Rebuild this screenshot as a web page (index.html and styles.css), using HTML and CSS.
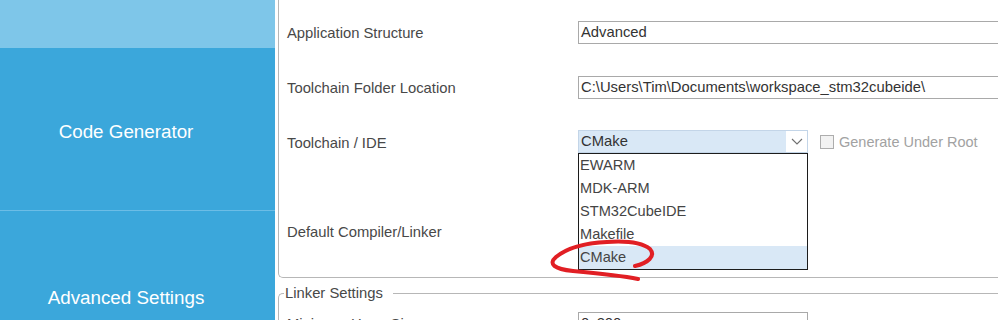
FILE: index.html
```html
<!DOCTYPE html>
<html lang="en">
<head>
  <meta charset="UTF-8">
  <meta name="viewport" content="width=device-width, initial-scale=1.0">
  <title>Project Manager - Code Generator</title>
  <link rel="stylesheet" href="styles.css">
</head>
<body>

<div class="app">
  <nav class="sidebar">
    <div class="nav-head"></div>
    <div class="nav-item nav-active">Code Generator</div>
    <div class="nav-item nav-last">Advanced Settings</div>
  </nav>

  <main class="content">
    <div class="group">
      <div class="row">
        <span class="label">Application Structure</span>
        <div class="field">Advanced</div>
      </div>
      <div class="row">
        <span class="label">Toolchain Folder Location</span>
        <div class="field">C:\Users\Tim\Documents\workspace_stm32cubeide\</div>
      </div>
      <div class="row">
        <span class="label">Toolchain / IDE</span>
        <div class="control-line">
          <div class="combo-wrap">
            <div class="combo">
              <span class="combo-value">CMake</span>
              <span class="combo-arrow">
                <svg width="12" height="7" viewBox="0 0 12 7"><path d="M1 1 L6 6 L11 1" fill="none" stroke="#6f6f6f" stroke-width="1.1"/></svg>
              </span>
            </div>
            <ul class="dropdown">
              <li>EWARM</li>
              <li>MDK-ARM</li>
              <li>STM32CubeIDE</li>
              <li>Makefile</li>
              <li class="selected">CMake</li>
            </ul>
          </div>
          <label class="check"><span class="box"></span>Generate Under Root</label>
        </div>
      </div>
      <div class="row row-compiler">
        <span class="label">Default Compiler/Linker</span>
      </div>
    </div>

    <fieldset class="linker">
      <legend>Linker Settings</legend>
      <div class="row row-linker">
        <span class="label">Minimum Heap Size</span>
        <div class="field field-short">0x200</div>
      </div>
    </fieldset>
  </main>

  <!-- hand drawn annotation over the list -->
  <svg class="mark" width="130" height="60" viewBox="0 0 130 60">
    <path d="M95 36 C108 33, 116 26, 110 19 C100 11, 82 11, 67 12 C45 13, 27 18, 16 27 C8 34, 14 39, 33 41 C55 43, 78 45, 98 49" fill="none" stroke="#e11f24" stroke-width="4" stroke-linecap="round" stroke-linejoin="round"/>
  </svg>
</div>

</body>
</html>
```

FILE: styles.css
```css
:root {
  --side-blue: #3ba7db;
  --side-light: #7ec6e9;
  --side-line: #6cbde6;
  --border-gray: #a9a9a9;
  --group-line: #b7b7b7;
  --text-color: #484848;
  --select-blue: #d9e8f6;
}

* {
  box-sizing: border-box;
}

body {
  margin: 0;
  width: 998px;
  height: 320px;
  overflow: hidden;
  background-color: white;
  font-family: "Liberation Sans", Arial, sans-serif;
  color: var(--text-color);
}

.app {
  position: relative;
  display: flex;
  height: 320px;
}

/* left navigation */
.sidebar {
  width: 275px;
  flex-shrink: 0;
  background-color: var(--side-blue);
  color: white;
  font-size: 18.8px;
}

.nav-head {
  height: 48px;
  background-color: var(--side-light);
}

.nav-item {
  display: flex;
  align-items: center;
  justify-content: center;
  padding-right: 23px;
}

.nav-active {
  height: 163px;
  padding-top: 6px;
  border-bottom: 1px solid var(--side-line);
}

.nav-last {
  height: 174px;
}

/* main panel */
.content {
  flex: 1;
  padding-left: 3px;
  font-size: 14.8px;
  min-width: 0;
}

.group {
  border: 1px solid var(--group-line);
  border-top: none;
  border-right: none;
  border-radius: 0 0 0 5px;
  padding: 5px 0 18px 8px;
}

.row {
  display: grid;
  grid-template-columns: 291px 1fr;
  align-items: center;
  height: 55px;
}

.row-compiler {
  margin-top: 34px;
}

.label {
  white-space: nowrap;
}

.field {
  height: 23px;
  line-height: 21px;
  padding-left: 2px;
  border: 1px solid var(--border-gray);
  border-right: none;
  color: #333;
  white-space: nowrap;
  overflow: hidden;
}

.field-short {
  width: 230px;
  border-right: 1px solid var(--border-gray);
}

.control-line {
  display: flex;
  align-items: center;
  margin-top: -2px;
}

.combo-wrap {
  position: relative;
  width: 230px;
}

.combo {
  display: flex;
  height: 23px;
  border: 1px solid #c3d5e8;
  background-color: var(--select-blue);
  color: #333;
}

.combo-value {
  flex: 1;
  line-height: 21px;
  padding-left: 2px;
}

.combo-arrow {
  width: 21px;
  display: flex;
  align-items: center;
  justify-content: center;
  background-color: white;
}

.dropdown {
  position: absolute;
  top: 23px;
  left: 0;
  width: 230px;
  margin: 0;
  padding: 0;
  list-style: none;
  background-color: white;
  border: 1px solid #1c1c1c;
  color: #444;
  font-size: 14.6px;
  z-index: 2;
}

.dropdown li {
  height: 23px;
  line-height: 23px;
  padding-left: 1px;
}

.dropdown li.selected {
  background-color: var(--select-blue);
}

.check {
  display: flex;
  align-items: center;
  margin-left: 12px;
  font-size: 14.5px;
  color: #a2a2a2;
}

.check .box {
  width: 14px;
  height: 14px;
  margin-right: 5px;
  border: 1px solid #adadad;
  background-color: #f2f2f2;
}

/* linker settings */
.linker {
  margin: 7px 0 0;
  padding: 0 0 0 8px;
  border: 1px solid var(--group-line);
  border-right: none;
  border-bottom: none;
  border-radius: 5px 0 0 0;
  min-inline-size: 0;
}

.linker legend {
  margin-left: -3px;
  padding: 0 10px 0 1px;
  line-height: 16px;
}

.row-linker {
  height: 23px;
  margin-top: 11px;
}

.mark {
  position: absolute;
  left: 540px;
  top: 230px;
  z-index: 3;
}
```
